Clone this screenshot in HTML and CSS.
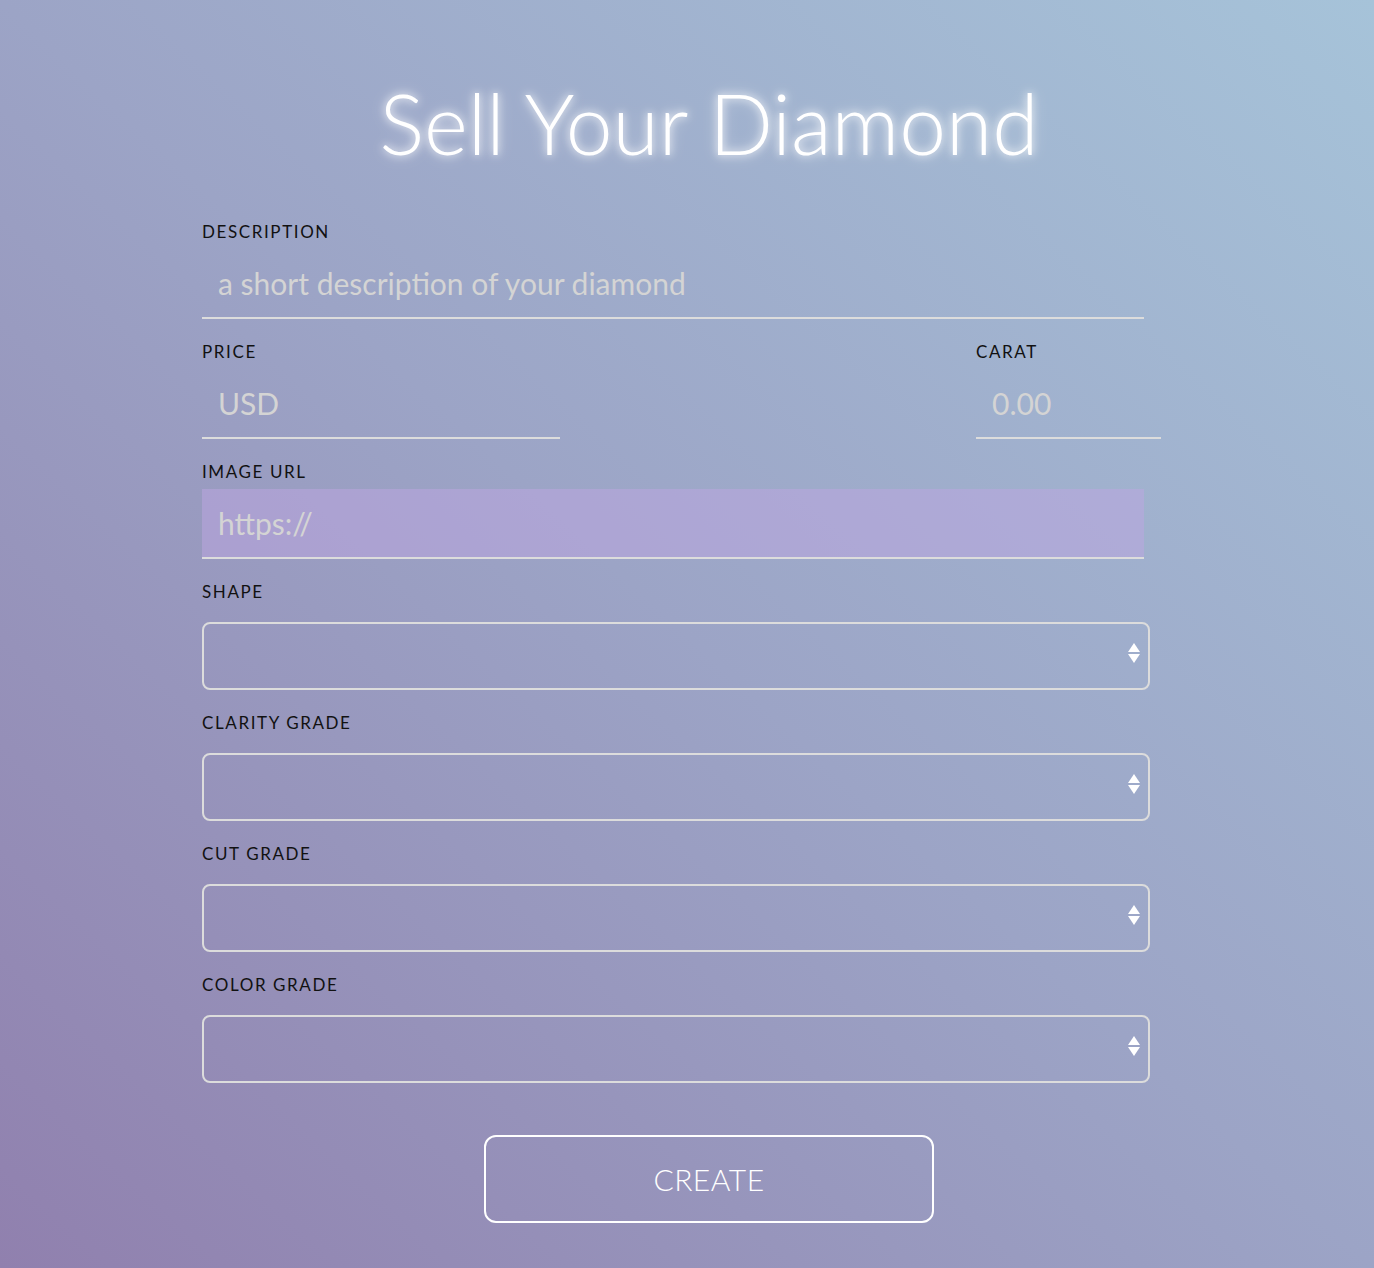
FILE: index.html
```html
<!DOCTYPE html>
<html>
<head>
<meta charset="utf-8">
<link rel="stylesheet" href="styles.css">
</head>
<body>
<div class="page">
  <div class="container">
    <h1 class="title">Sell Your Diamond</h1>
    <form class="form">
      <div class="field">
        <label class="label">DESCRIPTION</label>
        <input class="line-input desc" type="text" placeholder="a short description of your diamond">
      </div>
      <div class="row">
        <div class="field">
          <label class="label">PRICE</label>
          <input class="line-input price" type="text" placeholder="USD">
        </div>
        <div class="field">
          <label class="label">CARAT</label>
          <input class="line-input carat" type="text" placeholder="0.00">
        </div>
      </div>
      <div class="field">
        <label class="label">IMAGE URL</label>
        <input class="line-input url" type="text" placeholder="https://">
      </div>
      <div class="field sel-field">
        <label class="label">SHAPE</label>
        <div class="select"><span class="arrows"><i class="up"></i><i class="down"></i></span></div>
      </div>
      <div class="field sel-field">
        <label class="label">CLARITY GRADE</label>
        <div class="select"><span class="arrows"><i class="up"></i><i class="down"></i></span></div>
      </div>
      <div class="field sel-field">
        <label class="label">CUT GRADE</label>
        <div class="select"><span class="arrows"><i class="up"></i><i class="down"></i></span></div>
      </div>
      <div class="field sel-field">
        <label class="label">COLOR GRADE</label>
        <div class="select"><span class="arrows"><i class="up"></i><i class="down"></i></span></div>
      </div>
      <div class="actions">
        <button class="create" type="button">CREATE</button>
      </div>
    </form>
  </div>
</div>
</body>
</html>
```
FILE: styles.css
```css
html, body {
  margin: 0;
  padding: 0;
  height: 100%;
}
body {
  font-family: "Lato", "Noto Sans", sans-serif;
  background: linear-gradient(to top right, #9080ae 0%, #9ca4c6 50%, #a6c3d9 100%);
  min-height: 1268px;
}
.page {
  padding-top: 73px;
}
.container {
  margin-left: 202px;
  width: 1014px;
}
.title {
  margin: 0;
  text-align: center;
  font-weight: 300;
  font-size: 84px;
  line-height: 100px;
  color: #ffffff;
  text-shadow: 0 0 8px rgba(255,255,255,0.9), 0 0 16px rgba(255,255,255,0.5);
}
.form {
  margin-top: 47px;
  display: flex;
  flex-direction: column;
}
.field {
  display: flex;
  flex-direction: column;
  margin-bottom: 21px;
}
.label {
  font-size: 17px;
  line-height: 24px;
  letter-spacing: 1.6px;
  color: #111;
  height: 24px;
}
.line-input {
  box-sizing: border-box;
  height: 70px;
  margin-top: 5px;
  border: none;
  border-bottom: 2px solid #dcdcdc;
  background: transparent;
  padding: 0 16px;
  font-family: "Lato", "Noto Sans", sans-serif;
  font-weight: 400;
  font-size: 30px;
  color: #ddd;
  outline: none;
}
.line-input::placeholder {
  color: #d4d4d4;
}
.desc { width: 942px; }
.row {
  display: flex;
  justify-content: space-between;
  width: 959px;
}
.price { width: 358px; }
.carat { width: 185px; }
.url {
  width: 942px;
  background: rgba(190,165,225,0.5);
}
.sel-field .label {
  margin-bottom: 18px;
}
.select {
  box-sizing: border-box;
  width: 948px;
  height: 68px;
  border: 2px solid #dcdcdc;
  border-radius: 8px;
  position: relative;
}
.arrows {
  position: absolute;
  right: 8px;
  top: 19px;
  display: flex;
  flex-direction: column;
  gap: 2px;
}
.arrows i {
  display: block;
  width: 0;
  height: 0;
  border-left: 6px solid transparent;
  border-right: 6px solid transparent;
}
.arrows .up { border-bottom: 9px solid #fff; }
.arrows .down { border-top: 9px solid #fff; }
.actions {
  display: flex;
  justify-content: center;
  margin-top: 31px;
}
.create {
  box-sizing: border-box;
  width: 450px;
  height: 88px;
  border: 2px solid #fff;
  border-radius: 12px;
  background: transparent;
  color: #fff;
  font-family: "Lato", "Noto Sans", sans-serif;
  font-weight: 300;
  font-size: 30px;
  letter-spacing: 0.5px;
}
```
